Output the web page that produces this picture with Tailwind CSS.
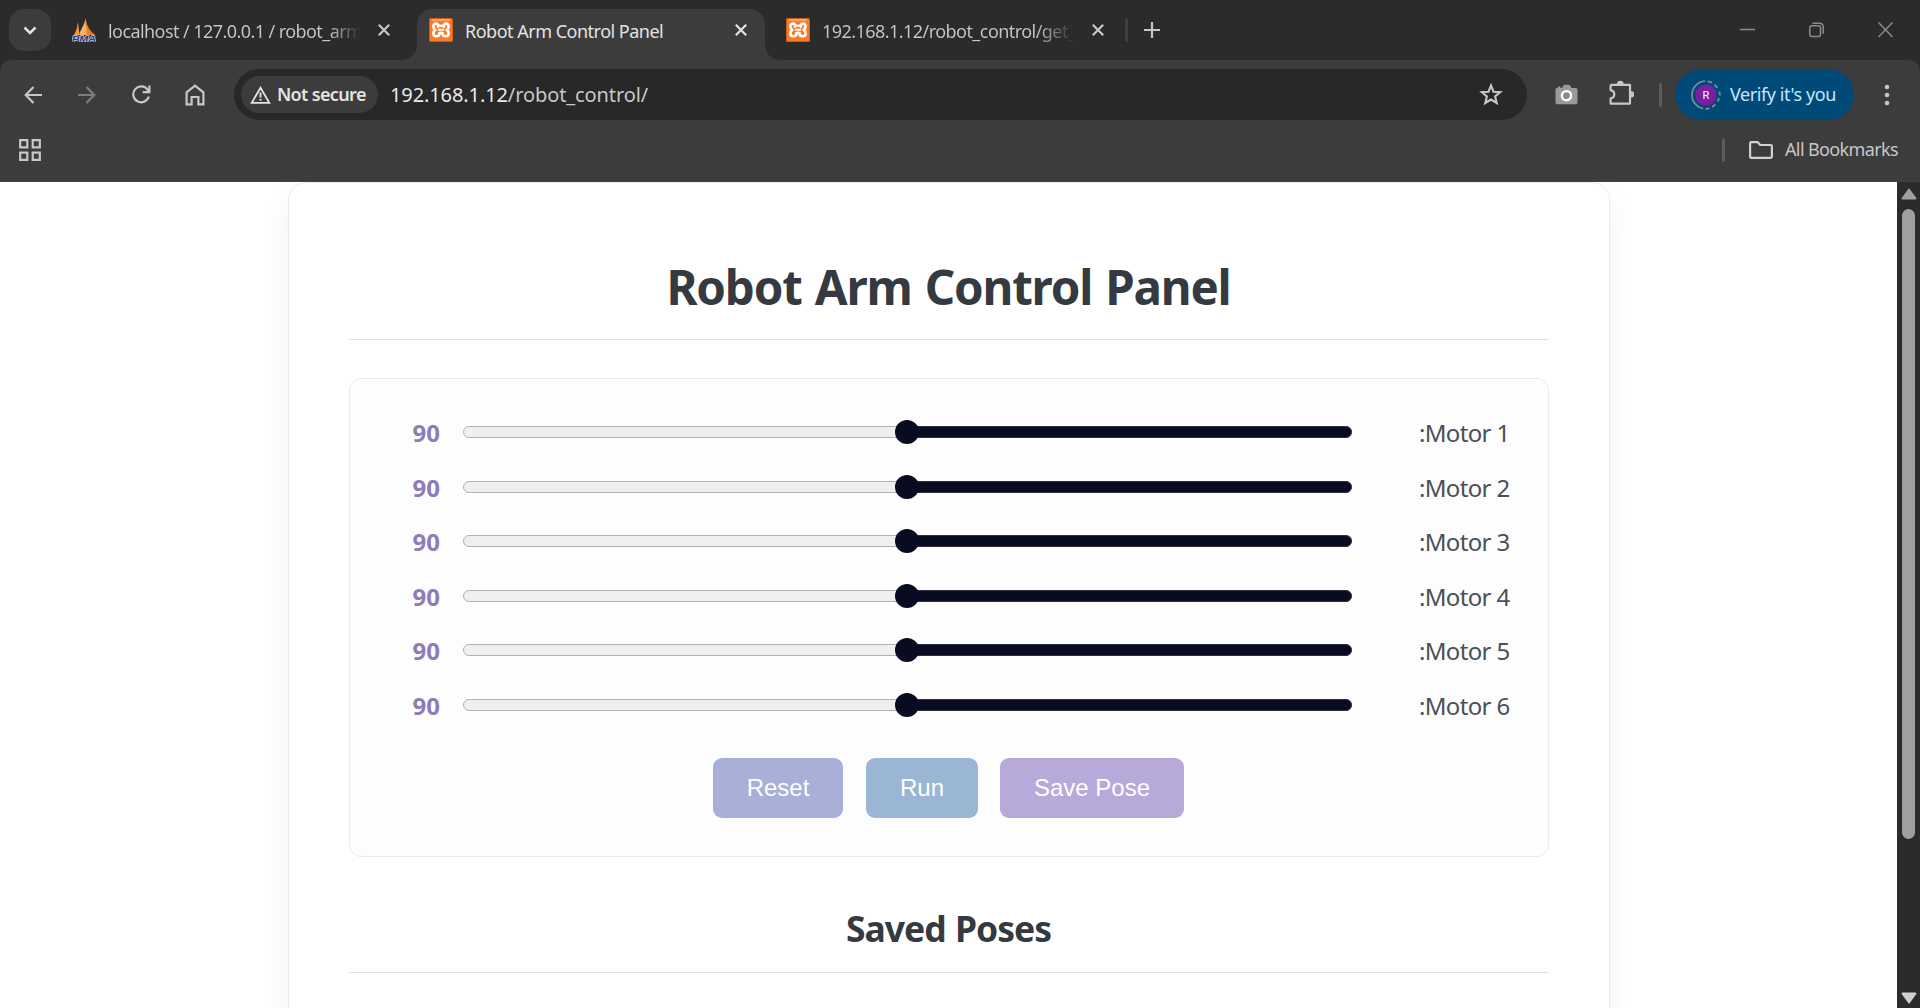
<!DOCTYPE html>
<html lang="en">
<head>
<meta charset="utf-8">
<title>Robot Arm Control Panel</title>
<script src="https://cdn.jsdelivr.net/npm/@tailwindcss/browser@4"></script>
</head>
<body class="w-[1920px] h-[1008px] overflow-hidden bg-[#2b2b2b] font-['Noto_Sans',sans-serif] flex flex-col">
<svg class="hidden">
  <symbol id="xampp" viewBox="0 0 24 24">
    <rect width="24" height="24" rx="1.5" fill="#c9601c"/><rect x="1" y="1" width="22" height="22" rx="1" fill="#fb7a24"/>
    <rect x="3" y="1.5" width="18" height="1" fill="#fdc9a2"/>
    <path d="M9 8.800C9.800 4.600 4.400 4.600 4.400 8.400C4.400 10.200 5.200 11.200 6.200 11.900C5 12.800 4.400 13.800 4.400 15.400C4.400 19 10 19.200 10.600 15.800M15 8.800C14.200 4.600 19.600 4.600 19.600 8.400C19.600 10.200 18.800 11.200 17.800 11.900C19 12.800 19.600 13.800 19.600 15.400C19.600 19 14 19.200 13.400 15.800M10.200 15.800C10.200 14.400 13.800 14.400 13.800 15.800" fill="none" stroke="#fff" stroke-width="2.600" stroke-linejoin="round" stroke-linecap="round"/>
    <path d="M8.500 6.200Q12 9.500 15.500 6.200M8.800 11.700h6.400" fill="none" stroke="#fff" stroke-width="2"/>
  </symbol>
  <symbol id="close" viewBox="0 0 12 12"><path d="M.8.8l10.400 10.400M11.200.8L.8 11.200" stroke="currentColor" stroke-width="2.200"/></symbol>
</svg>

<!-- tab strip -->
<div class="h-[60px] shrink-0 flex items-center bg-[#2b2b2b] text-[18px] leading-[30px] text-[#c7c7c7] whitespace-pre">
  <div class="ml-[9px] size-[42px] rounded-[15px] bg-[#3c3c3c] flex items-center justify-center">
    <svg width="14" height="9" viewBox="0 0 14 9"><path d="M1.500 1.500L7 7l5.500-5.500" fill="none" stroke="#e3e3e3" stroke-width="2.500"/></svg>
  </div>
  <svg class="ml-[21px] shrink-0" width="24" height="24" viewBox="0 0 24 24">
    <path d="M2 17Q5.500 11 6 4L7.500 17zM6.500 17Q12 10 13.500 0L16.500 17z" fill="#f6993a"/><path d="M14.200 2.500Q15.500 12 23.500 17H15.500z" fill="#e58025"/><path d="M8 14l5-10 1 13H8z" fill="#f9b266"/>
    <text x="0" y="23.500" textLength="24" lengthAdjust="spacingAndGlyphs" font-family="Liberation Sans" font-weight="bold" font-style="italic" font-size="9.500" fill="#2e3a7a" stroke="#c9cce0" stroke-width="1.500" paint-order="stroke">PMA</text>
  </svg>
  <div class="ml-[12px] pt-[2px] w-[252px] overflow-hidden tracking-[-0.57px] bg-linear-to-r from-[#c7c7c7] from-88% to-transparent to-100% bg-clip-text text-transparent">localhost / 127.0.0.1 / robot_arm</div>
  <svg class="ml-[18px] text-[#c7c7c7]" width="12" height="12"><use href="#close"/></svg>
  <div class="ml-[27px] w-[348px] h-[51px] mt-[9px] relative rounded-t-[15px] bg-[#3c3c3c] flex items-center text-[#e3e3e3] pb-[9px]">
    <svg class="absolute -left-[15px] bottom-0" width="15" height="15"><path d="M15 0v15H0A15 15 0 0 0 15 0z" fill="#3c3c3c"/></svg>
    <svg class="absolute -right-[15px] bottom-0" width="15" height="15"><path d="M0 0v15h15A15 15 0 0 1 0 0z" fill="#3c3c3c"/></svg>
    <svg class="ml-[12px]" width="24" height="24"><use href="#xampp"/></svg>
    <span class="ml-[12px] pt-[2px] w-[263px] tracking-[-0.5px]">Robot Arm Control Panel</span>
    <svg class="ml-[7px]" width="12" height="12"><use href="#close"/></svg>
  </div>
  <svg class="ml-[21px]" width="24" height="24"><use href="#xampp"/></svg>
  <div class="ml-[12px] pt-[2px] w-[252px] overflow-hidden tracking-[-0.55px] bg-linear-to-r from-[#c7c7c7] from-85% to-transparent to-100% bg-clip-text text-transparent">192.168.1.12/robot_control/get_</div>
  <svg class="ml-[18px] text-[#c7c7c7]" width="12" height="12"><use href="#close"/></svg>
  <div class="ml-[21px] w-[3px] h-[24px] rounded-full bg-[#3f3f3f]"></div>
  <svg class="ml-[16px]" width="16" height="16"><path d="M8 0v16M0 8h16" stroke="#c7c7c7" stroke-width="2.200"/></svg>
  <svg class="ml-auto" width="15" height="15"><path d="M0 6.500h15" stroke="#8c8c8c" stroke-width="1.500"/></svg>
  <svg class="ml-[54px]" width="15" height="16" fill="none" stroke="#8c8c8c" stroke-width="1.500"><rect x=".8" y="3.700" width="10.700" height="10.700" rx="2.200"/><path d="M3.500 1.200h7a3.500 3.500 0 0 1 3.700 3.500v7"/></svg>
  <svg class="ml-[54px] mr-[27px]" width="15" height="16"><path d="M.5 .5l14 14.500M14.500 .5L.5 15" stroke="#8c8c8c" stroke-width="1.500"/></svg>
</div>

<!-- toolbar and bookmarks bar -->
<div class="h-[122px] shrink-0 rounded-t-[12px] bg-[#3c3c3c] flex flex-col border-b border-[#424242] text-[18px]">
  <div class="h-[69px] pt-[9px] pb-[9px] flex items-center text-[#c7c7c7]">
    <svg class="ml-[24px]" width="18" height="18" fill="none" stroke="#c7c7c7" stroke-width="2.200"><path d="M18 9H2M9.500 1L1.700 9l7.800 8"/></svg>
    <svg class="ml-[36px]" width="18" height="18" fill="none" stroke="#7d7d7d" stroke-width="2.200"><path d="M0 9h16M8.500 1l7.800 8-7.800 8"/></svg>
    <svg class="ml-[36px]" width="19" height="19" viewBox="0 0 19 19" fill="none" stroke="#c7c7c7" stroke-width="2.200"><path d="M16.800 11.500A7.900 7.900 0 1 1 15.600 4.700L17 6.300M17.400 .5v6.700h-6.700"/></svg>
    <svg class="ml-[34px]" width="20" height="22" fill="none" stroke="#c7c7c7" stroke-width="2.200"><path d="M1.600 8.300L10 1.600l8.400 6.700V20.400h-5V13H6.600v7.400h-5z"/></svg>
    <div class="ml-[29px] w-[1293px] h-[51px] rounded-full bg-[#282828] flex items-center pl-[7px]">
      <div class="w-[137px] h-[37px] rounded-full bg-[#3c3c3c] flex items-center pl-[9px]">
        <svg width="21" height="18" viewBox="0 0 21 18"><path d="M10.500 1.700L19.300 16.800H1.700z" fill="none" stroke="#e3e3e3" stroke-width="1.800"/><path d="M10.500 6.500v5M10.500 12.800v2" stroke="#e3e3e3" stroke-width="1.900"/></svg>
        <span class="ml-[6px] font-semibold text-[#e3e3e3] tracking-[-0.65px] whitespace-pre">Not secure</span>
      </div>
      <span class="ml-[12px] text-[20px] tracking-[-0.1px] text-[#c7c7c7]"><span class="text-[#e8e8e8]">192.168.1.12</span>/robot_control/</span>
      <svg class="ml-auto mr-[24px]" width="24" height="23" viewBox="0 0 24 23"><path d="M12 2.500l2.500 6.200 6.700.5-5.100 4.300 1.600 6.500L12 16.500 6.300 20l1.600-6.500L2.800 9.200l6.700-.5z" fill="none" stroke="#c7c7c7" stroke-width="2.100"/></svg>
    </div>
    <svg class="ml-[28px]" width="23" height="21" viewBox="0 0 23 21"><path d="M2 4h1V2.500h2.500V4H7L8.500 1.500Q9 .8 10 .8h3.500q1 0 1.500.7L16.500 4H21q1.500 0 1.500 1.500v13q0 1.700-1.700 1.700H2.200Q.5 20.200.5 18.500V5.500Q.5 4 2 4z" fill="#9a9a9a"/><circle cx="11.500" cy="11.700" r="4.600" fill="#8a8a8a" stroke="#fff" stroke-width="2.400"/></svg>
    <svg class="ml-[31px] mr-[1px] -mt-[3px]" width="25" height="26" viewBox="0 0 25 26"><path d="M2.700 4.800H21V23.600H1.600V18.400C6.500 17.500 6.500 11 1.600 10.100V5.900Q1.600 4.800 2.700 4.800z" fill="none" stroke="#c7c7c7" stroke-width="2.200" stroke-linejoin="round"/><path d="M8 4a3.300 3.300 0 0 1 6.600 0zM22 11a3.300 3.300 0 0 1 0 6.600z" fill="#c7c7c7"/></svg>
    <div class="ml-[24px] w-[3px] h-[24px] rounded-full bg-[#5c5c5c]"></div>
    <div class="ml-[13px] w-[179px] h-[51px] rounded-full bg-[#004a77] flex items-center pl-[15px]">
      <svg width="32" height="32" viewBox="0 0 32 32"><circle cx="16" cy="16" r="10.500" fill="#7b1fa2"/><path d="M15 2.200A13.800 13.800 0 0 0 13 29.500M15.500 29.800a13.800 13.800 0 0 0 4-.5M22 28a13.800 13.800 0 0 0 3.500-2.600M27.500 22.500a13.800 13.800 0 0 0 1.500-3.500M29.800 16.500a13.800 13.800 0 0 0-.5-4M27.500 9a13.800 13.800 0 0 0-3-3.300M22 3.800a13.800 13.800 0 0 0-4.500-1.500" fill="none" stroke="#7a8c9c" stroke-width="1.800"/><text x="16" y="20" text-anchor="middle" font-family="Roboto" font-size="11" fill="#fff">R</text></svg>
      <span class="ml-[8px] text-[#c2e7ff] tracking-[-0.42px] whitespace-pre">Verify it's you</span>
    </div>
    <svg class="ml-[30px]" width="6" height="22" fill="#c7c7c7"><circle cx="3" cy="3" r="2.300"/><circle cx="3" cy="11" r="2.300"/><circle cx="3" cy="19" r="2.300"/></svg>
  </div>
  <div class="flex-1 flex items-center pb-[14px] pt-[3px]">
    <svg class="ml-[19px]" width="22" height="22" fill="none" stroke="#c7c7c7" stroke-width="2.200"><path d="M1.200 1.200h7.100v7.100H1.200zM13.700 1.200h7.100v7.100h-7.100zM1.200 13.700h7.100v7.100H1.200zM13.700 13.700h7.100v7.100h-7.100z"/></svg>
    <div class="ml-auto w-[3px] h-[24px] rounded-full bg-[#5c5c5c]"></div>
    <svg class="ml-[24px]" width="24" height="18" viewBox="0 0 24 18"><path d="M2.300 1.200H8.700L11.200 4H21.700q1.200 0 1.200 1.200V15.500q0 1.300-1.200 1.300H2.300q-1.200 0-1.200-1.300V2.400Q1.100 1.200 2.300 1.200z" fill="none" stroke="#d0d0d0" stroke-width="2.200"/></svg>
    <span class="ml-[12px] w-[135px] pb-[2px] leading-[24px] text-[#c7c7c7] tracking-[-0.63px] whitespace-pre">All Bookmarks</span>
  </div>
</div>

<!-- page -->
<div class="flex-1 min-h-0 flex overflow-hidden bg-white">
  <main class="flex-1 flex justify-center items-start overflow-hidden">
    <section class="w-[1322px] h-[900px] shrink-0 rounded-[18px] border border-[#e9ecef] bg-white shadow-[0_12px_30px_rgba(0,0,0,0.05)] px-[60px] pt-[74px]">
      <h1 class="h-[83px] border-b border-[#dee2e6] text-center text-[47.5px] leading-[60px] font-bold tracking-[-1.2px] [word-spacing:2px] text-[#343a40]">Robot Arm Control Panel</h1>
      <div class="mt-[38px] h-[479px] rounded-[12px] border border-[#e9ecef] bg-[#fdfdfd] pt-[26px]">
        <div id="motors"></div>
        <div class="mt-[26px] flex justify-center gap-[22px] font-['Liberation_Sans',Arial,sans-serif] text-[24px] text-white">
          <button class="w-[130px] h-[60px] mr-[1px] rounded-[9px] bg-[#a8b0d9]">Reset</button>
          <button class="w-[112px] h-[60px] rounded-[9px] bg-[#9bb5d5]">Run</button>
          <button class="w-[184px] h-[60px] rounded-[9px] bg-[#b8a9db]">Save Pose</button>
        </div>
      </div>
      <h2 class="mt-[46px] h-[70px] border-b border-[#dee2e6] text-center text-[35.5px] leading-[50px] font-bold tracking-[-1px] [word-spacing:1px] text-[#343a40]">Saved Poses</h2>
    </section>
  </main>
  <!-- scrollbar -->
  <div class="w-[23px] shrink-0 bg-[#2b2b2b] flex flex-col items-center pt-[6px] pb-[4px]">
    <svg width="16" height="12"><path d="M8 1.500L14.500 10.500h-13z" fill="#9f9f9f" stroke="#9f9f9f" stroke-width="2" stroke-linejoin="round"/></svg>
    <div class="mt-[9px] w-[13px] h-[630px] rounded-full bg-[#9f9f9f]"></div>
    <svg class="mt-auto" width="16" height="12"><path d="M8 10.500L14.500 1.500h-13z" fill="#cfcfcf" stroke="#cfcfcf" stroke-width="2" stroke-linejoin="round"/></svg>
  </div>
</div>
<script>
document.getElementById('motors').innerHTML = [1,2,3,4,5,6].map(n => `
  <div class="h-[54.5px] flex items-center pl-[63px] pr-[38px] text-[24px] leading-[36px]">
    <span class="w-[50px] pt-[2px] font-bold text-[#8e7cb8]">90</span>
    <div class="w-[889px] h-[24px] relative flex items-center">
      <div class="w-full h-[12px] rounded-full border border-[#b2b2b2] bg-[#efefef]"></div>
      <div class="absolute right-0 w-[445px] h-[12px] rounded-r-full border border-[#2e2f40] bg-[#090b20]"></div>
      <div class="absolute left-[432px] size-[24px] rounded-full bg-[#090b20]"></div>
    </div>
    <span class="ml-auto pt-[2px] tracking-[-0.65px] text-[#495057] whitespace-pre">:Motor ${n}</span>
  </div>`).join('');
</script>
</body>
</html>
